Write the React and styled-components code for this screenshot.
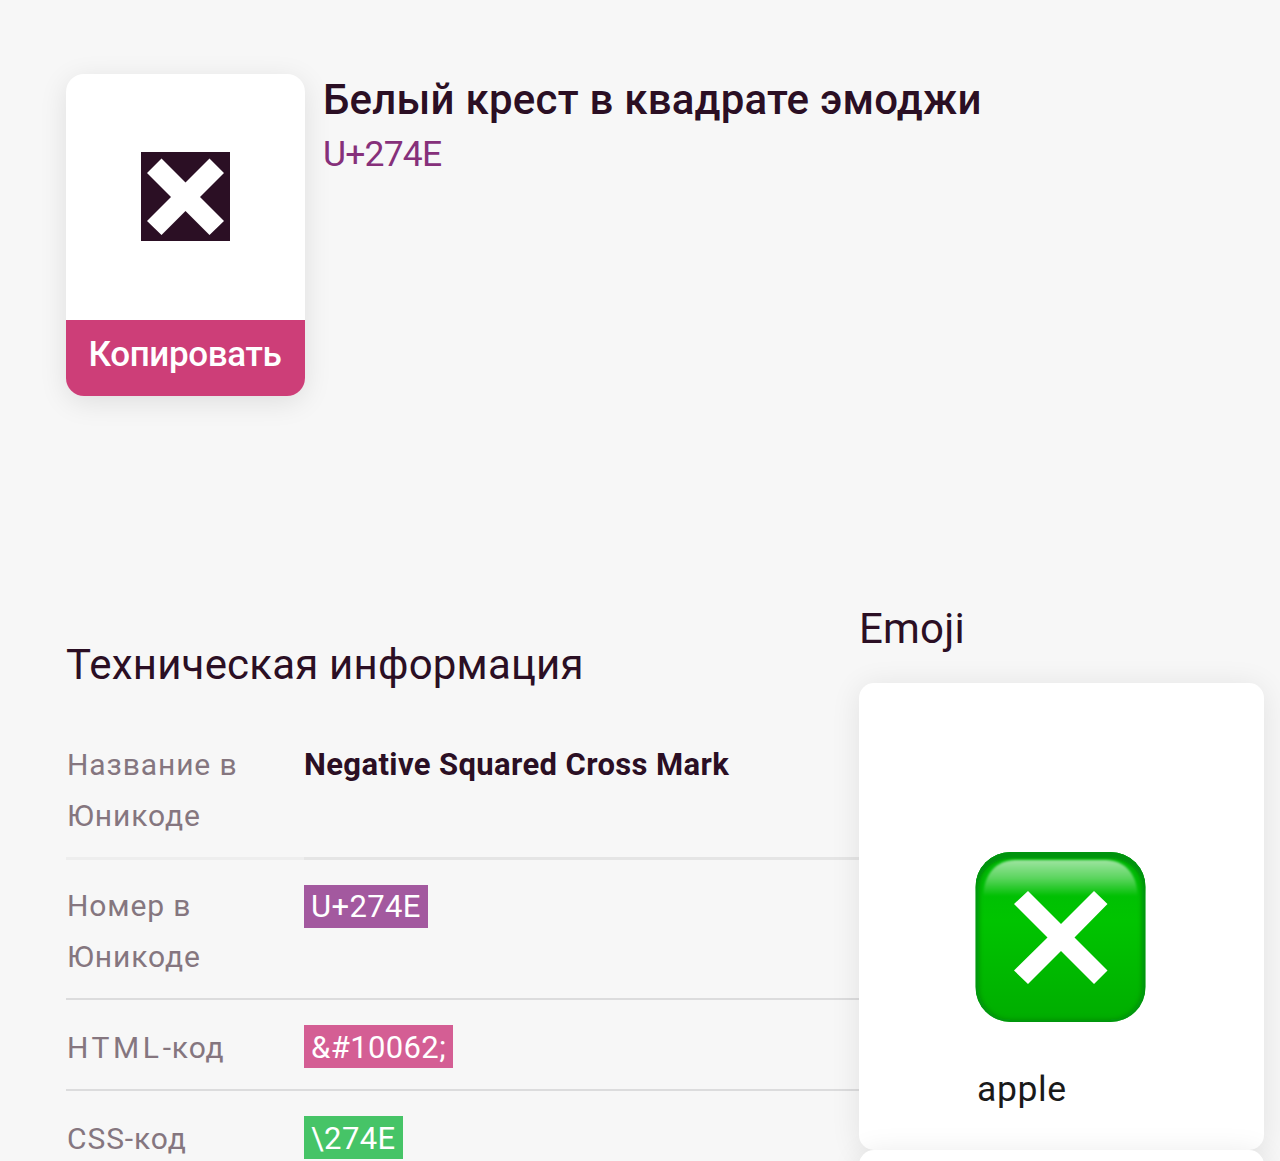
import React from 'react';
import styled, {createGlobalStyle} from 'styled-components'

const GlobalStyle = createGlobalStyle`
  * {
    box-sizing: border-box;
  }
  body {
    margin: 0;
    background: #f7f7f7;
    color: #2b0f24;
    font-family: Roboto, 'Liberation Sans', sans-serif;
  }
`

const Page = styled.div`
  height: 1161px;
  overflow: hidden;
  padding: 74px 0 0 66px;
`

const Header = styled.header`
  display: flex;
  gap: 18px;
  height: 521px;
`

const SymbolCard = styled.div`
  display: flex;
  flex-direction: column;
  width: 239px;
  height: 322px;
  border-radius: 18px;
  background: #fff;
  box-shadow: 0 6px 28px rgba(0, 0, 0, 0.1);
  overflow: hidden;
`

const SymbolBox = styled.div`
  display: flex;
  align-items: center;
  justify-content: center;
  height: 246px;
  padding: 0 1px 2px 0;
`

const CopyButton = styled.button`
  height: 76px;
  padding: 0 1px 8px 0;
  border: 0;
  background: #cd3e78;
  color: #fff;
  font-family: inherit;
  font-size: 35px;
  font-weight: 500;
  letter-spacing: -0.35px;
`

const Title = styled.h1`
  margin: 0;
  font-size: 42px;
  font-weight: 500;
  line-height: 52px;
  letter-spacing: 0.23px;
`

const Code = styled.p`
  margin: 0;
  color: #86307a;
  font-size: 35.5px;
  line-height: 56px;
  letter-spacing: -0.8px;
`

const Columns = styled.main`
  display: grid;
  grid-template-columns: 793px 405px;
`

const Section = styled.section`
  padding-top: 39px;
`

const SectionTitle = styled.h2`
  margin: 0;
  font-size: 42px;
  font-weight: 400;
  line-height: 62px;
  letter-spacing: 0.2px;
`

const InfoTable = styled.dl`
  margin: 22px 0 0;
`

const Row = styled.div`
  display: grid;
  grid-template-columns: 238px 1fr;
  height: ${props => props.$tall ? '141px' : '91px'};
`

const Label = styled.dt`
  margin-bottom: ${props => props.$soft ? '-1px' : 0};
  padding: ${props => props.$short ? '23px' : '22px'} 0 0 1px;
  border-bottom: ${props => props.$soft ? '3px solid #eeeeee' : '2px solid #dcdcdd'};
  color: #85767f;
  font-size: 30px;
  line-height: 50.5px;
  letter-spacing: 0.9px;
`

const Wide = styled.span`
  letter-spacing: 3.6px;
`

const Value = styled.dd`
  margin: ${props => props.$soft ? '0 0 -1px' : 0};
  padding-top: 22px;
  border-bottom: ${props => props.$soft ? '3px solid #e5e5e5' : '2px solid #dcdcdd'};
  font-size: 31px;
  font-weight: ${props => props.$soft ? 700 : 400};
  line-height: 50px;
  letter-spacing: 0.38px;
`

const Badge = styled.span`
  display: inline-block;
  height: 43px;
  margin-top: ${props => props.$tall ? '4px' : '3px'};
  padding: 0 7px;
  background: ${props => props.$color};
  color: #fff;
  line-height: ${props => props.$tall ? '44px' : '46px'};
  vertical-align: top;
`

const AsideTitle = styled(SectionTitle)`
  line-height: 68px;
  margin-bottom: 20px;
`

const EmojiCard = styled.div`
  height: 467px;
  padding: 169px 0 0 116px;
  border-radius: 15px;
  background: #fff;
  box-shadow: 0 3px 30px rgba(0, 0, 0, 0.09);
`

const EmojiName = styled.div`
  margin-top: 42px;
  padding-left: 2px;
  color: #1a1a1a;
  font-size: 35.5px;
  line-height: 50px;
  letter-spacing: 0.6px;
`

const CrossSquare = () => (
  <svg width="89" height="89" viewBox="0 0 89 89">
    <path fill="#2b0f24" d="M0 0h89v89H0z" />
    <path fill="#fff" d="M20.5 6.5 44.5 30.5 68.5 6.5 83 21 59 45 83 69 68.5 83 44.5 59 20.5 83 6 69 30 45 6 21z" />
  </svg>
)

const GreenCross = () => (
  <svg width="171" height="170" viewBox="-.5 0 171 170" display="block">
    <defs>
      <linearGradient id="body" x1="0" y1="0" x2="0" y2="1">
        <stop offset="0" stopColor="#00b908" />
        <stop offset="0.4" stopColor="#00c400" />
        <stop offset="1" stopColor="#00ad00" />
      </linearGradient>
      <linearGradient id="shine" x1="0" y1="0" x2="0" y2="1">
        <stop offset="0" stopColor="#fff" stopOpacity="0.62" />
        <stop offset="0.5" stopColor="#fff" stopOpacity="0.36" />
        <stop offset="1" stopColor="#fff" stopOpacity="0" />
      </linearGradient>
      <filter id="soft" x="-10%" y="-10%" width="120%" height="120%">
        <feGaussianBlur stdDeviation="2.4" />
      </filter>
      <filter id="haze" x="-10%" y="-10%" width="120%" height="120%">
        <feGaussianBlur stdDeviation="1" />
      </filter>
      <clipPath id="shape">
        <rect width="170" height="170" rx="35" />
      </clipPath>
    </defs>
    <g clipPath="url(#shape)">
      <rect width="170" height="170" fill="url(#body)" />
      <rect x="0" y="1" width="170" height="170" rx="35" fill="none" stroke="#008f0c" strokeWidth="7" filter="url(#soft)" />
      <path d="M0 44C0 18 18 6 38 6H132C152 6 170 18 170 44V0H0Z" fill="#00930c" filter="url(#haze)" />
      <path d="M8 44C8 22 21 8 40 8H130C149 8 162 22 162 44Z" fill="url(#shine)" filter="url(#haze)" />
    </g>
    <path fill="#fff" d="M52.500 39 85.500 72 118.500 39 132 52 99 85.500 132 118.500 118.500 132 85.500 99 52.500 132 38.500 118.500 72 85.500 38.500 52z" />
  </svg>
)

const rows = [
  { label: 'Номер в Юникоде', value: 'U+274E', color: '#a3599f', tall: true },
  { label: <><Wide>HTML</Wide>-код</>, value: '&#10062;', color: '#d45e94' },
  { label: 'CSS-код', value: '\\274E', color: '#46c467' },
]

export default function App() {
  return (
    <Page>
      <GlobalStyle />
      <Header>
        <SymbolCard>
          <SymbolBox><CrossSquare /></SymbolBox>
          <CopyButton type="button">Копировать</CopyButton>
        </SymbolCard>
        <div>
          <Title>Белый крест в квадрате эмоджи</Title>
          <Code>U+274E</Code>
        </div>
      </Header>

      <Columns>
        <Section>
          <SectionTitle>Техническая информация</SectionTitle>
          <InfoTable>
            <Row $tall>
              <Label $soft>Название в Юникоде</Label>
              <Value $soft>Negative Squared Cross Mark</Value>
            </Row>
            {rows.map(row => (
              <Row key={row.value} $tall={row.tall}>
                <Label $short={!row.tall}>{row.label}</Label>
                <Value><Badge $color={row.color} $tall={row.tall}>{row.value}</Badge></Value>
              </Row>
            ))}
          </InfoTable>
        </Section>

        <aside>
          <AsideTitle>Emoji</AsideTitle>
          <EmojiCard>
            <GreenCross />
            <EmojiName>apple</EmojiName>
          </EmojiCard>
          <EmojiCard />
        </aside>
      </Columns>
    </Page>
  )
}
